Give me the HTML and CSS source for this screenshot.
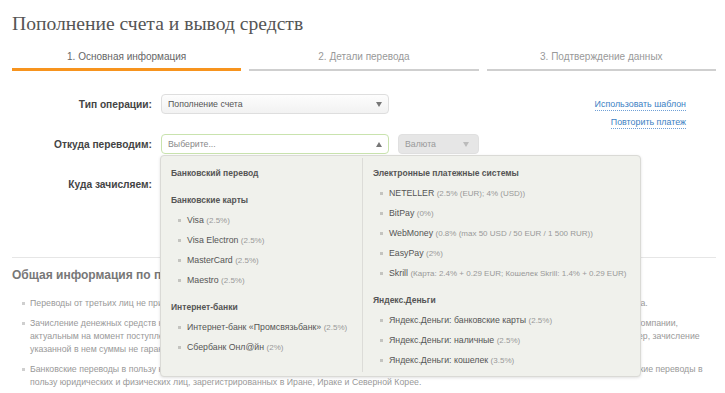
FILE: index.html
```html
<!DOCTYPE html>
<html lang="ru">
<head>
<meta charset="utf-8">
<title>Пополнение счета и вывод средств</title>
<link rel="stylesheet" href="styles.css">
</head>
<body>
<div class="page">
  <h1 class="title">Пополнение счета и вывод средств</h1>

  <div class="steps">
    <div class="step active">1. Основная информация</div>
    <div class="step">2. Детали перевода</div>
    <div class="step">3. Подтверждение данных</div>
  </div>

  <div class="form-area">
    <div class="form">
      <div class="row">
        <label class="lbl">Тип операции:</label>
        <div class="select"><span class="val">Пополнение счета</span><span class="arr down"></span></div>
      </div>
      <div class="row">
        <label class="lbl">Откуда переводим:</label>
        <div class="field">
          <div class="select open"><span class="ph">Выберите...</span><span class="arr up"></span></div>
          <div class="dropdown">
            <div class="col">
              <div class="group">
                <div class="gh">Банковский перевод</div>
              </div>
              <div class="group">
                <div class="gh">Банковские карты</div>
                <div class="item">Visa <span class="fee">(2.5%)</span></div>
                <div class="item">Visa Electron <span class="fee">(2.5%)</span></div>
                <div class="item">MasterCard <span class="fee">(2.5%)</span></div>
                <div class="item">Maestro <span class="fee">(2.5%)</span></div>
              </div>
              <div class="group">
                <div class="gh">Интернет-банки</div>
                <div class="item">Интернет-банк «Промсвязьбанк» <span class="fee">(2.5%)</span></div>
                <div class="item">Сбербанк Онл@йн <span class="fee">(2%)</span></div>
              </div>
            </div>
            <div class="col right">
              <div class="group">
                <div class="gh">Электронные платежные системы</div>
                <div class="item">NETELLER <span class="fee">(2.5% (EUR); 4% (USD))</span></div>
                <div class="item">BitPay <span class="fee">(0%)</span></div>
                <div class="item">WebMoney <span class="fee">(0.8% (max 50 USD / 50 EUR / 1 500 RUR))</span></div>
                <div class="item">EasyPay <span class="fee">(2%)</span></div>
                <div class="item">Skrill <span class="fee">(Карта: 2.4% + 0.29 EUR; Кошелек Skrill: 1.4% + 0.29 EUR)</span></div>
              </div>
              <div class="group">
                <div class="gh">Яндекс.Деньги</div>
                <div class="item">Яндекс.Деньги: банковские карты <span class="fee">(2.5%)</span></div>
                <div class="item">Яндекс.Деньги: наличные <span class="fee">(2.5%)</span></div>
                <div class="item">Яндекс.Деньги: кошелек <span class="fee">(3.5%)</span></div>
              </div>
            </div>
          </div>
        </div>
        <div class="select currency"><span class="val">Валюта</span><span class="arr down light"></span></div>
      </div>
      <div class="row">
        <label class="lbl">Куда зачисляем:</label>
        <div class="select"><span class="ph">Выберите...</span><span class="arr down"></span></div>
      </div>
    </div>
    <div class="links">
      <a class="link" href="#">Использовать шаблон</a>
      <a class="link" href="#">Повторить платеж</a>
    </div>
  </div>

  <div class="info">
    <h2 class="info-title">Общая информация по пополнению счета</h2>
    <ul class="notes">
      <li>Переводы от третьих лиц не принимаются. Денежные суммы, пришедшие от третьих лиц, будут возвращены отправителю за вычетом комиссии банка.</li>
      <li>Зачисление денежных средств на ваш торговый счет производится в валюте торгового счета с автоматической конвертацией по внутреннему курсу компании,<br>актуальным на момент поступления средств на счет компании. В случае, если в назначении банковского платежа не указан или неверно указан номер, зачисление<br>указанной в нем суммы не гарантируется.</li>
      <li>Банковские переводы в пользу компании от третьих лиц не принимаются. Компания также не осуществляет и не принимает никакие прямые банковские переводы в<br>пользу юридических и физических лиц, зарегистрированных в Иране, Ираке и Северной Корее.</li>
    </ul>
  </div>
</div>
</body>
</html>
```

FILE: styles.css
```css
* { box-sizing: border-box; }
html, body { margin: 0; padding: 0; background: #fff; }
body {
  font-family: "Liberation Sans", Arial, sans-serif;
  color: #555;
  width: 725px;
  height: 393px;
  overflow: hidden;
}
.page { padding: 0 9px 0 12px; }

.title {
  margin: 0;
  padding-top: 11px;
  font-family: "Liberation Serif", "Times New Roman", serif;
  font-weight: normal;
  font-size: 19.6px;
  line-height: 26px;
  color: #555;
}

.steps {
  display: flex;
  gap: 8px;
  margin-top: 13px;
  align-items: flex-end;
}
.step {
  flex: 1;
  text-align: center;
  font-size: 10px;
  color: #999;
  padding-bottom: 6px;
  border-bottom: 2px solid #cfcfcf;
  line-height: 13px;
}
.step.active {
  color: #666;
  border-bottom: 3px solid #f7941e;
  padding-bottom: 5px;
}

.form-area {
  display: flex;
  justify-content: space-between;
  margin-top: 23px;
}
.form {
  display: flex;
  flex-direction: column;
  gap: 20px;
}
.row {
  display: flex;
  align-items: center;
  gap: 9px;
  height: 20px;
}
.lbl {
  width: 140px;
  text-align: right;
  font-weight: bold;
  font-size: 10.2px;
  color: #444;
}
.field { position: relative; height: 20px; }
.select {
  width: 228px;
  height: 20px;
  border: 1px solid #dedede;
  border-radius: 4px;
  background: linear-gradient(#fdfdfd, #f2f2f2);
  display: flex;
  align-items: center;
  justify-content: space-between;
  padding: 0 6px 0 6px;
  font-size: 8.75px;
  color: #555;
}
.select.open {
  border-color: #c9e3ae;
  background: #fff;
}
.ph { color: #888; }
.select.currency {
  width: 81px;
  background: #e6e6e6;
  border-color: #e0e0e0;
  color: #999;
  padding: 0 9px 0 6px;
}
.arr {
  width: 0;
  height: 0;
  border-left: 3.5px solid transparent;
  border-right: 3.5px solid transparent;
}
.arr.down { border-top: 5px solid #777; }
.arr.up { border-bottom: 5px solid #777; }
.arr.light { border-top-color: #bbb; }

.links {
  display: flex;
  flex-direction: column;
  align-items: flex-end;
  gap: 5px;
  margin-right: 30px;
  padding-top: 4px;
}
.link {
  font-size: 8.9px;
  color: #3c7fc4;
  text-decoration: none;
  border-bottom: 1px dotted #6fa0d6;
  line-height: 12px;
}

.dropdown {
  position: absolute;
  top: 21px;
  left: -1px;
  width: 481px;
  height: 222px;
  background: #f0f1ec;
  border: 1px solid #dadad6;
  border-radius: 4px;
  box-shadow: 0 1px 3px rgba(0,0,0,0.12);
  display: flex;
  z-index: 5;
  padding: 0 0 4px;
}
.col {
  width: 201px;
  padding: 7px 0 0 10px;
  display: flex;
  flex-direction: column;
  gap: 7px;
}
.col.right {
  flex: 1;
  border-left: 1px solid #dcdcd8;
  padding-left: 10px;
  margin-top: 2px;
  padding-top: 5px;
}
.gh {
  font-weight: bold;
  font-size: 8.5px;
  line-height: 20px;
  height: 20px;
  color: #555;
}
.item {
  position: relative;
  padding-left: 16px;
  font-size: 8.75px;
  line-height: 20px;
  height: 20px;
  white-space: nowrap;
  color: #555;
}
.item::before {
  content: "";
  position: absolute;
  left: 7px;
  top: 9px;
  width: 3px;
  height: 3px;
  background: #c4c4c0;
}
.fee { color: #999; font-size: 8px; line-height: 1; }

.info {
  margin-top: 63px;
  border-top: 1px solid #e6e6e6;
}
.info-title {
  margin: 0;
  padding-top: 9px;
  font-size: 12px;
  line-height: 16px;
  font-weight: bold;
  color: #777;
}
.notes {
  list-style: none;
  margin: 14px 0 0;
  padding: 0;
  display: flex;
  flex-direction: column;
  gap: 7px;
}
.notes li {
  position: relative;
  padding-left: 18px;
  font-size: 8.75px;
  line-height: 13px;
  color: #999;
  white-space: nowrap;
}
.notes li::before {
  content: "";
  position: absolute;
  left: 10px;
  top: 5px;
  width: 3px;
  height: 3px;
  background: #cfcfcf;
}
```
